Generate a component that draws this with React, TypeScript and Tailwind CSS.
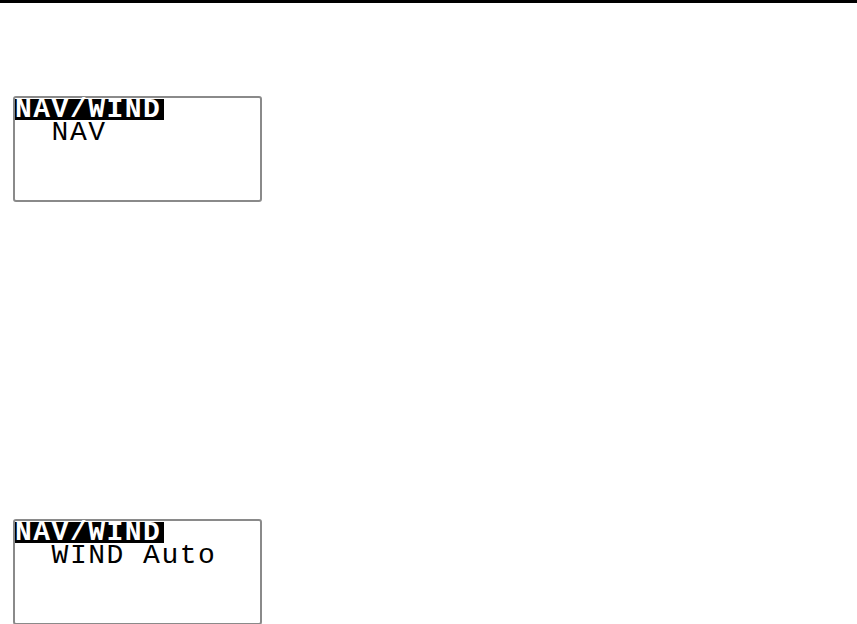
export default function App() {
  const screens = [
    { title: 'NAV/WIND', line: '  NAV', mt: 'mt-[93px]' },
    { title: 'NAV/WIND', line: '  WIND Auto', mt: 'mt-[317px]' },
  ]

  return (
    <div className="min-h-screen bg-white">
      <div className="h-[3px] bg-black w-full" />
      {screens.map((s, i) => (
        <div
          key={i}
          className={`${s.mt} ml-[13px] w-[249px] h-[106px] border-2 border-[#8a8a8a] rounded-[3px] bg-white pt-[1px] flex flex-col items-start font-['Liberation_Mono',monospace] text-[28px] tracking-[1.5px]`}
        >
          <div className="h-[21px] leading-[22px] bg-black text-white font-bold pr-[3px] whitespace-pre">{s.title}</div>
          <div className="h-[22px] leading-[25px] whitespace-pre text-black">{s.line}</div>
        </div>
      ))}
    </div>
  )
}
